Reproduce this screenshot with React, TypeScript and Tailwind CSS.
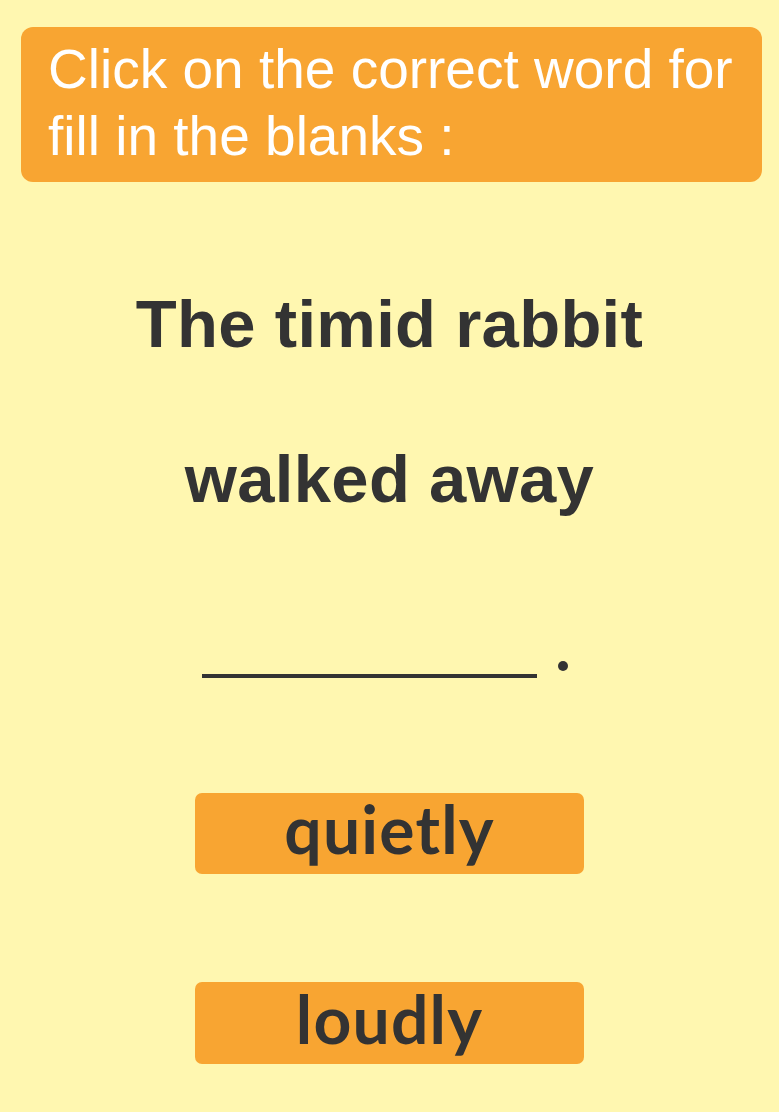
export default function App() {
  return (
    <div className="min-h-[1112px] w-full bg-[#fff7b0] flex flex-col items-stretch">
      <div className="mt-[27px] ml-[21px] mr-[17px] h-[155px] rounded-[12px] bg-[#f8a532] pl-[27px] pt-[9px]">
        <p
          className="text-white text-[55px] leading-[67px]"
          style={{ fontFamily: '"Liberation Sans", Arial, sans-serif' }}
        >
          Click on the correct word for
          <br />
          fill in the blanks :
        </p>
      </div>

      <div
        className="flex flex-col items-center text-[#333333] font-bold"
        style={{ fontFamily: '"Liberation Sans", Arial, sans-serif' }}
      >
        <p className="mt-[109px] text-[67px] leading-[66px] tracking-[0.3px]">The timid rabbit</p>
        <p className="mt-[89px] text-[67px] leading-[66px] tracking-[0.3px]">walked away</p>
        <div className="mt-[149px] flex items-end pr-[9px]">
          <div className="w-[335px] h-[4px] bg-[#333333]" />
          <div className="ml-[21px] mb-[7px] w-[10px] h-[10px] rounded-full bg-[#333333]" />
        </div>
      </div>

      <div
        className="flex flex-col items-center text-[#333333] font-bold"
        style={{ fontFamily: 'Lato, "Open Sans", sans-serif' }}
      >
        <button className="mt-[115px] w-[389px] h-[81px] rounded-[7px] bg-[#f8a532] flex items-center justify-center text-[66px] leading-none tracking-[1.2px] pb-[9px]">
          quietly
        </button>
        <button className="mt-[108px] w-[389px] h-[82px] rounded-[7px] bg-[#f8a532] flex items-center justify-center text-[66px] leading-none tracking-[1.2px] pb-[9px]">
          loudly
        </button>
      </div>
    </div>
  );
}
